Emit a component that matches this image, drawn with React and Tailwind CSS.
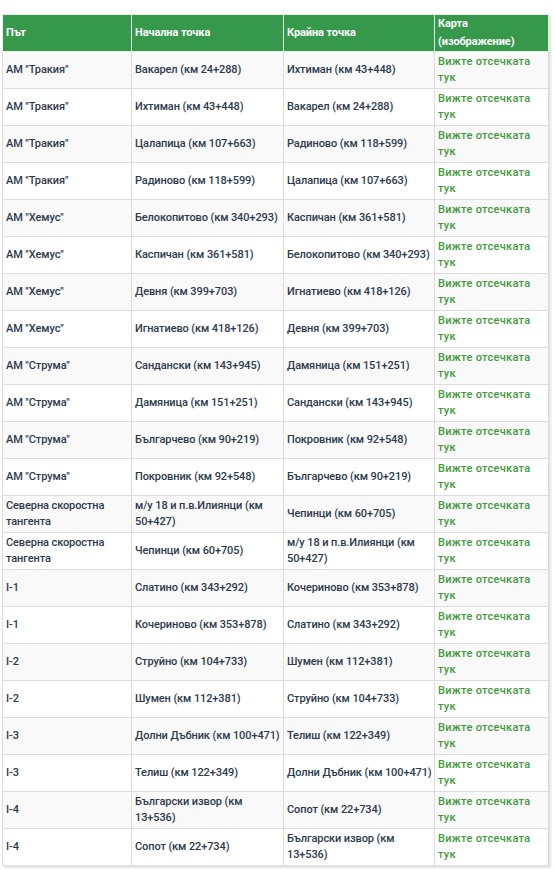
import React from 'react';

const rows = [
  ['АМ "Тракия"', 'Вакарел (км 24+288)', 'Ихтиман (км 43+448)'],
  ['АМ "Тракия"', 'Ихтиман (км 43+448)', 'Вакарел (км 24+288)'],
  ['АМ "Тракия"', 'Цалапица (км 107+663)', 'Радиново (км 118+599)'],
  ['АМ "Тракия"', 'Радиново (км 118+599)', 'Цалапица (км 107+663)'],
  ['АМ "Хемус"', 'Белокопитово (км 340+293)', 'Каспичан (км 361+581)'],
  ['АМ "Хемус"', 'Каспичан (км 361+581)', 'Белокопитово (км 340+293)'],
  ['АМ "Хемус"', 'Девня (км 399+703)', 'Игнатиево (км 418+126)'],
  ['АМ "Хемус"', 'Игнатиево (км 418+126)', 'Девня (км 399+703)'],
  ['АМ "Струма"', 'Сандански (км 143+945)', 'Дамяница (км 151+251)'],
  ['АМ "Струма"', 'Дамяница (км 151+251)', 'Сандански (км 143+945)'],
  ['АМ "Струма"', 'Българчево (км 90+219)', 'Покровник (км 92+548)'],
  ['АМ "Струма"', 'Покровник (км 92+548)', 'Българчево (км 90+219)'],
  ['Северна скоростна тангента', 'м/у 18 и п.в.Илиянци (км 50+427)', 'Чепинци (км 60+705)'],
  ['Северна скоростна тангента', 'Чепинци (км 60+705)', 'м/у 18 и п.в.Илиянци (км 50+427)'],
  ['I-1', 'Слатино (км 343+292)', 'Кочериново (км 353+878)'],
  ['I-1', 'Кочериново (км 353+878)', 'Слатино (км 343+292)'],
  ['I-2', 'Струйно (км 104+733)', 'Шумен (км 112+381)'],
  ['I-2', 'Шумен (км 112+381)', 'Струйно (км 104+733)'],
  ['I-3', 'Долни Дъбник (км 100+471)', 'Телиш (км 122+349)'],
  ['I-3', 'Телиш (км 122+349)', 'Долни Дъбник (км 100+471)'],
  ['I-4', 'Български извор (км 13+536)', 'Сопот (км 22+734)'],
  ['I-4', 'Сопот (км 22+734)', 'Български извор (км 13+536)'],
];

const td = 'h-[37px] border border-[#dddddd] pl-[3px] pr-[1px] py-0 align-middle';
const th = 'h-[37px] border border-[#e4eee6] pl-[3px] pr-[1px] py-0 align-middle font-bold';

export default function App() {
  return (
    <div className="bg-white pt-[14px] pl-[2px] w-[555px] min-h-[869px]" style={{ fontFamily: 'Roboto, "Noto Sans", sans-serif' }}>
      <table className="w-[546px] table-fixed border-collapse text-[11px] leading-[16px] font-medium tracking-[-0.1px] text-[#2c3a4c] shadow-[2px_2px_2px_rgba(0,0,0,0.12)]">
        <colgroup>
          <col className="w-[129px]" />
          <col className="w-[152px]" />
          <col className="w-[151px]" />
          <col className="w-[114px]" />
        </colgroup>
        <thead>
          <tr className="bg-[#36984a] text-white text-left">
            <th className={th}>Път</th>
            <th className={th}>Начална точка</th>
            <th className={th}>Крайна точка</th>
            <th className={th + ' leading-[18px] pr-[8px]'}>Карта (изображение)</th>
          </tr>
        </thead>
        <tbody>
          {rows.map((r, i) => (
            <tr key={i} className={i % 2 === 0 ? 'bg-[#f9f9f9]' : 'bg-white'}>
              <td className={td}>{r[0]}</td>
              <td className={td}>{r[1]}</td>
              <td className={td}>{r[2]}</td>
              <td className={td + ' pr-[10px] tracking-[0.3px]'}>
                <a href="#" className="text-[#3f9a3c]">Вижте отсечката тук</a>
              </td>
            </tr>
          ))}
        </tbody>
      </table>
    </div>
  );
}
